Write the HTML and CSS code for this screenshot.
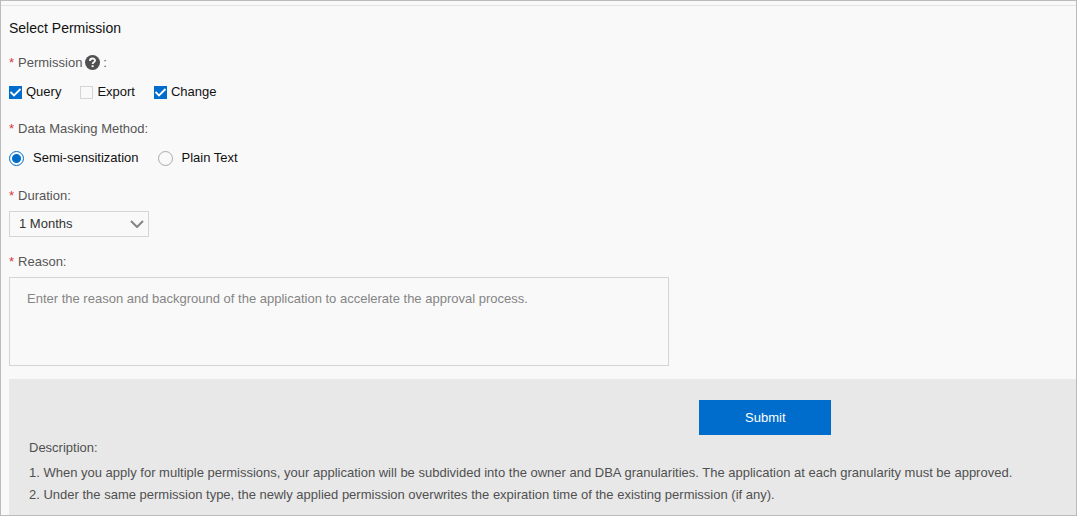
FILE: index.html
```html
<!DOCTYPE html>
<html lang="en">
<head>
<meta charset="utf-8">
<meta name="viewport" content="width=device-width, initial-scale=1">
<title>Select Permission</title>
<link rel="stylesheet" href="styles.css">
</head>
<body>
<form class="page">
  <hr class="divider">
  <h1 class="title">Select Permission</h1>

  <fieldset class="field">
    <legend class="label"><span class="required">*</span>Permission<button class="help" type="button" aria-label="Help"><svg viewBox="0 0 15 15" width="15" height="15" aria-hidden="true"><circle cx="7.5" cy="7.5" r="7.5" fill="#505050"/><path d="M5 5.9C5 2.7 10 2.8 10 5.6C10 7.3 7.6 7.3 7.6 9.1" fill="none" stroke="#f9f9f9" stroke-width="1.9"/><path d="M6.6 10.2h2v1.9h-2z" fill="#f9f9f9"/></svg></button>:</legend>
    <div class="checks">
      <label class="check"><input class="box" type="checkbox" checked>Query</label>
      <label class="check"><input class="box" type="checkbox">Export</label>
      <label class="check"><input class="box" type="checkbox" checked>Change</label>
    </div>
  </fieldset>

  <fieldset class="field">
    <legend class="label"><span class="required">*</span>Data Masking Method:</legend>
    <div class="radios">
      <label class="radio"><input class="dot" type="radio" name="masking" checked>Semi-sensitization</label>
      <label class="radio"><input class="dot" type="radio" name="masking">Plain Text</label>
    </div>
  </fieldset>

  <div class="field">
    <label class="label" for="duration"><span class="required">*</span>Duration:</label>
    <div class="select-wrap">
      <select class="select" id="duration"><option>1 Months</option></select>
      <svg class="chevron" viewBox="0 0 14 8" width="14" height="8" aria-hidden="true"><path d="M1 1L7 7L13 1" fill="none" stroke="#858585" stroke-width="2"/></svg>
    </div>
  </div>

  <div class="field">
    <label class="label" for="reason"><span class="required">*</span>Reason:</label>
    <textarea class="reason" id="reason" placeholder="Enter the reason and background of the application to accelerate the approval process."></textarea>
  </div>

  <footer class="footer">
    <button class="submit" type="submit">Submit</button>
    <div class="notes">
      <p class="notes-title">Description:</p>
      <p class="note">1. When you apply for multiple permissions, your application will be subdivided into the owner and DBA granularities. The application at each granularity must be approved.</p>
      <p class="note">2. Under the same permission type, the newly applied permission overwrites the expiration time of the existing permission (if any).</p>
    </div>
  </footer>
</form>
</body>
</html>
```
FILE: styles.css
```css
* {
  box-sizing: border-box;
}

body {
  margin: 0;
  background: #f9f9f9;
  color: #111;
  font: 13px/20px "Liberation Sans", "Noto Sans CJK SC", Arial, sans-serif;
}

.page {
  display: flex;
  flex-direction: column;
  min-height: 100vh;
  padding-left: 8px;
  border: 1px solid #bbb;
}

.divider {
  width: calc(100% + 8px);
  height: 1px;
  margin: 4px 0 0 -8px;
  border: 0;
  background: #e3e3e3;
}

.title {
  margin: 12px 0 14px;
  font-size: 14px;
  font-weight: 400;
}

.field {
  min-width: 0;
  margin: 0;
  padding: 0;
  border: 0;
}

.label {
  display: flex;
  align-items: center;
  height: 22px;
  padding: 0;
  color: #555;
}

.required {
  margin-right: 4px;
  color: #d9363e;
}

.help {
  width: 15px;
  height: 15px;
  margin: 0 3px 2px;
  padding: 0;
  border: 0;
  background: none;
}

.help svg {
  display: block;
}

.checks,
.radios {
  display: flex;
  align-items: center;
  padding: 8px 0 16px;
}

.checks {
  gap: 19px;
}

.radios {
  gap: 19px;
  padding-bottom: 17px;
}

.check,
.radio {
  display: flex;
  align-items: center;
}

.check {
  gap: 4px;
}

.radio {
  gap: 9px;
}

.box,
.dot {
  flex: none;
  margin: 0;
  appearance: none;
}

.box {
  width: 13px;
  height: 13px;
  border: 1px solid #d5d5d5;
}

.box:checked {
  border-color: #006dcc;
  background: #006dcc url("data:image/svg+xml,%3Csvg xmlns='http://www.w3.org/2000/svg' viewBox='0 0 13 13'%3E%3Cpath d='M1.5 6L5 9.5L11.5 3' fill='none' stroke='white' stroke-width='1.8'/%3E%3C/svg%3E") center / 13px 13px no-repeat;
}

.dot {
  width: 15px;
  height: 15px;
  border: 1px solid #aaa;
  border-radius: 50%;
}

.dot:checked {
  border-color: #006dcc;
  background: radial-gradient(circle, #006dcc 4px, transparent 5px);
}

.select-wrap {
  display: grid;
  align-items: center;
  width: 140px;
  margin: 4px 0 14px;
}

.select,
.chevron {
  grid-area: 1 / 1;
}

.select {
  width: 100%;
  height: 26px;
  padding: 0 24px 0 9px;
  border: 1px solid #d5d5d5;
  border-radius: 0;
  appearance: none;
  background: transparent;
  color: #333;
  font: inherit;
}

.chevron {
  justify-self: end;
  margin-right: 5px;
  pointer-events: none;
}

.reason {
  display: block;
  width: 660px;
  max-width: 100%;
  height: 89px;
  margin: 4px 0 13px;
  padding: 11px 17px;
  border: 1px solid #d5d5d5;
  resize: none;
  background: transparent;
  color: #333;
  font: inherit;
}

.reason::placeholder {
  color: #858585;
}

.footer {
  flex: 1;
  padding-top: 21px;
  background: #e8e8e8;
  color: #505050;
}

.submit {
  display: block;
  width: 132px;
  height: 35px;
  margin: 0 0 2px 64.7%;
  padding: 0;
  border: 0;
  background: #006dcc;
  color: #fff;
  font: inherit;
}

.notes {
  padding: 0 20px 9px;
}

.notes-title,
.note {
  margin: 0;
  line-height: 22px;
}

.notes-title {
  margin-bottom: 3px;
}
```
